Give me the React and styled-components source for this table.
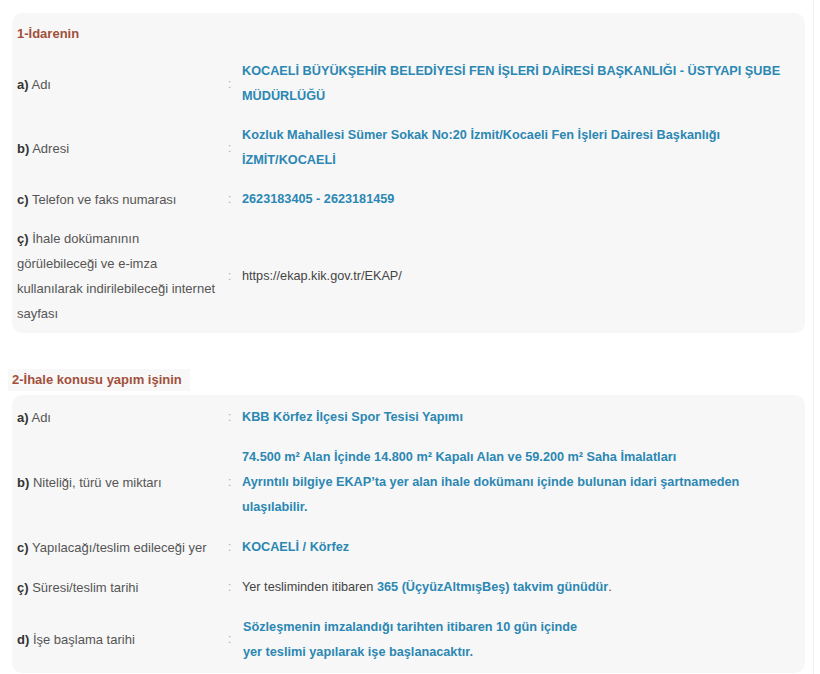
import React from "react";
import styled, { createGlobalStyle } from "styled-components";

const Global = createGlobalStyle`
  html, body { margin: 0; padding: 0; background: #ffffff; }
  body { font-family: "Liberation Sans", Arial, sans-serif; font-size: 13px; color: #555; }
`;

const Page = styled.div`
  width: 801px;
  padding: 13px 0 6px 12px;
  border-right: 1px solid #f1f1f1;
  min-height: 655px;
`;

const Card = styled.div`
  width: 793px;
  background: #f7f7f7;
  border-radius: 10px;
  padding: ${(p) => p.$pad};
  box-sizing: border-box;
`;

const CardTitle = styled.div`
  padding: 8px 5px 6px;
  line-height: 25px;
  font-weight: bold;
  color: #a24f3a;
`;

const OuterTitle = styled.div`
  display: inline-block;
  margin: 36px 0 4px -4px;
  padding: 0 8px 0 4px;
  line-height: 22px;
  background: #f8f8f8;
  font-weight: bold;
  color: #a24f3a;
`;

const Row = styled.div`
  display: grid;
  grid-template-columns: 200px 25px 1fr;
  align-items: center;
  padding: ${(p) => p.$gap} 5px;
  line-height: 25px;
`;

const Label = styled.div`
  color: #555;
  b { color: #333; }
`;

const Colon = styled.div`
  color: #aaa;
  padding-left: 11px;
  font-size: 12px;
`;

const Value = styled.div`
  font-size: 12.7px;
  padding-left: ${(p) => (p.$shift ? "1px" : "0")};
  color: ${(p) => (p.$plain ? "#444" : "#2b87b3")};
  font-weight: ${(p) => (p.$plain ? "normal" : "bold")};
`;

const Blue = styled.span`
  color: #2b87b3;
  font-weight: bold;
`;

const Line = styled.div``;

function InfoRow({ tag, label, gap, children, ...rest }) {
  return (
    <Row $gap={gap}>
      <Label>
        <b>{tag}</b> {label}
      </Label>
      <Colon>:</Colon>
      <Value {...rest}>{children}</Value>
    </Row>
  );
}

export default function App() {
  const g1 = "7px";
  const g2 = "7.5px";
  return (
    <>
      <Global />
      <Page>
        <Card $pad="0 0 0">
          <CardTitle>1-İdarenin</CardTitle>
          <InfoRow gap={g1} tag="a)" label="Adı">
            KOCAELİ BÜYÜKŞEHİR BELEDİYESİ FEN İŞLERİ DAİRESİ BAŞKANLIĞI - ÜSTYAPI ŞUBE MÜDÜRLÜĞÜ
          </InfoRow>
          <InfoRow gap={g1} tag="b)" label="Adresi">
            <Line>Kozluk Mahallesi Sümer Sokak No:20 İzmit/Kocaeli Fen İşleri Dairesi Başkanlığı</Line>
            <Line>İZMİT/KOCAELİ</Line>
          </InfoRow>
          <InfoRow gap={g1} tag="c)" label="Telefon ve faks numarası">
            2623183405 - 2623181459
          </InfoRow>
          <InfoRow
            gap={g1}
            tag="ç)"
            label="İhale dokümanının görülebileceği ve e-imza kullanılarak indirilebileceği internet sayfası"
            $plain
          >
            https://ekap.kik.gov.tr/EKAP/
          </InfoRow>
        </Card>

        <OuterTitle>2-İhale konusu yapım işinin</OuterTitle>

        <Card $pad="2px 0 1px">
          <InfoRow gap={g2} tag="a)" label="Adı">
            KBB Körfez İlçesi Spor Tesisi Yapımı
          </InfoRow>
          <InfoRow gap={g2} tag="b)" label="Niteliği, türü ve miktarı">
            <Line>74.500 m² Alan İçinde 14.800 m² Kapalı Alan ve 59.200 m² Saha İmalatları</Line>
            <Line>Ayrıntılı bilgiye EKAP’ta yer alan ihale dokümanı içinde bulunan idari şartnameden ulaşılabilir.</Line>
          </InfoRow>
          <InfoRow gap={g2} tag="c)" label="Yapılacağı/teslim edileceği yer">
            KOCAELİ / Körfez
          </InfoRow>
          <InfoRow gap={g2} tag="ç)" label="Süresi/teslim tarihi" $plain>
            Yer tesliminden itibaren <Blue>365 (ÜçyüzAltmışBeş) takvim günüdür</Blue>.
          </InfoRow>
          <InfoRow gap={g2} tag="d)" label="İşe başlama tarihi" $shift>
            <Line>Sözleşmenin imzalandığı tarihten itibaren 10 gün içinde</Line>
            <Line>yer teslimi yapılarak işe başlanacaktır.</Line>
          </InfoRow>
        </Card>
      </Page>
    </>
  );
}
